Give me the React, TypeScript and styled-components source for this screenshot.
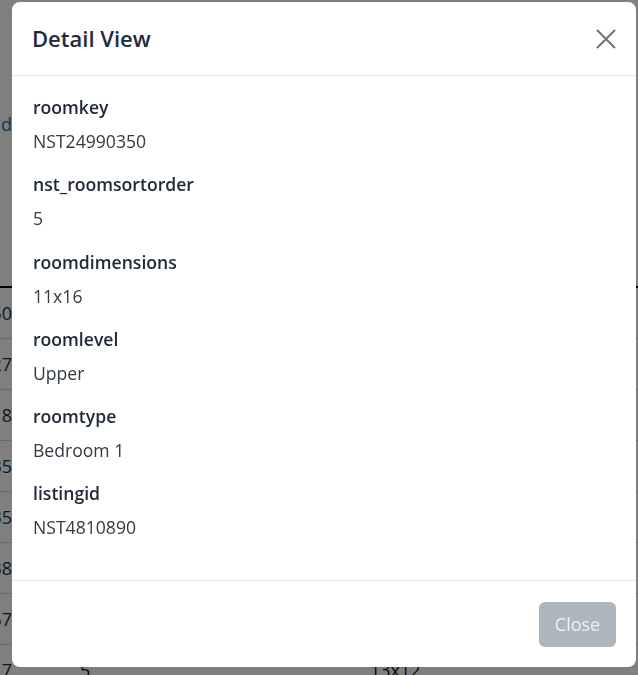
import styled, { createGlobalStyle } from "styled-components";

type Field = { label: string; value: string };

const fields: Field[] = [
  { label: "roomkey", value: "NST24990350" },
  { label: "nst_roomsortorder", value: "5" },
  { label: "roomdimensions", value: "11x16" },
  { label: "roomlevel", value: "Upper" },
  { label: "roomtype", value: "Bedroom 1" },
  { label: "listingid", value: "NST4810890" },
];

const rows = [
  ["NST24990350", "5", "11x16"],
  ["NST24990327", "3", "12x14"],
  ["NST24990318", "2", "10x11"],
  ["NST24990335", "4", "13x15"],
  ["NST24990335", "1", "14x18"],
  ["NST24990338", "6", "10x12"],
  ["NST24990357", "2", "11x13"],
  ["NST24990317", "5", "13x12"],
];

const GlobalStyle = createGlobalStyle`
  html, body {
    margin: 0;
    padding: 0;
    height: 100%;
    overflow: hidden;
    background: #ffffff;
    font-family: "Open Sans", "Noto Sans", sans-serif;
  }
`;

const Page = styled.div`
  width: 638px;
  height: 675px;
  overflow: hidden;
`;

const Table = styled.table`
  border-collapse: collapse;
  margin-left: -120px;
  width: 760px;
  table-layout: fixed;
  font-size: 18px;
  color: #111;

  col.key {
    width: 140px;
  }
  col.order {
    width: 290px;
  }
`;

const HeadCell = styled.th<{ $end?: boolean }>`
  box-sizing: border-box;
  height: 287px;
  padding: 112px 8px 0;
  vertical-align: top;
  text-align: ${(p) => (p.$end ? "right" : "left")};
  font-weight: 400;
  color: #1f6d95;
  border-bottom: 2px solid #000;
  white-space: nowrap;
`;

const Cell = styled.td<{ $end?: boolean; $indent?: number }>`
  box-sizing: border-box;
  height: 51px;
  padding: 0 8px 0 ${(p) => p.$indent ?? 8}px;
  text-align: ${(p) => (p.$end ? "right" : "left")};
  border-bottom: 1px solid #d4d4d4;
  color: ${(p) => (p.$end ? "#1a3340" : "#111")};
  white-space: nowrap;
`;

const Overlay = styled.div`
  position: fixed;
  inset: 0;
  background: rgba(0, 0, 0, 0.5);
`;

const Dialog = styled.div`
  position: fixed;
  top: 2px;
  left: 12px;
  width: 624px;
  height: 665px;
  box-sizing: border-box;
  display: flex;
  flex-direction: column;
  background: #ffffff;
  border-radius: 8px;
`;

const Header = styled.div`
  height: 74px;
  box-sizing: border-box;
  display: flex;
  align-items: center;
  justify-content: space-between;
  padding: 0 20px 0 20px;
  border-bottom: 1px solid #e6e8eb;
`;

const Title = styled.h5`
  margin: 0;
  font-size: 22px;
  font-weight: 600;
  color: #1e2b3d;
  line-height: 1.5;
`;

const CloseX = styled.button`
  width: 20px;
  height: 20px;
  padding: 0;
  border: 0;
  background: none;
  display: flex;
  cursor: pointer;
`;

const Body = styled.div`
  flex: 1;
  padding: 18px 21px 0;
  display: flex;
  flex-direction: column;
  gap: 17.3px;
`;

const Group = styled.div`
  display: flex;
  flex-direction: column;
  gap: 8px;
`;

const Label = styled.div`
  font-size: 17.6px;
  line-height: 26px;
  font-weight: 600;
  color: #212b38;
`;

const Value = styled.div`
  font-size: 17.6px;
  line-height: 26px;
  color: #333a42;
`;

const Footer = styled.div`
  height: 87px;
  box-sizing: border-box;
  display: flex;
  align-items: center;
  justify-content: flex-end;
  padding: 0 20px;
  border-top: 1px solid #e6e8eb;
`;

const CloseButton = styled.button`
  width: 77px;
  height: 45px;
  border: 0;
  border-radius: 6px;
  background: #adb5bd;
  color: #eef0f2;
  font-family: inherit;
  font-size: 18px;
`;

export default function App() {
  return (
    <Page>
      <GlobalStyle />
      <Table>
        <colgroup>
          <col className="key" />
          <col className="order" />
          <col />
        </colgroup>
        <thead>
          <tr>
            <HeadCell $end>roomkey_id</HeadCell>
            <HeadCell>nst_roomsortorder</HeadCell>
            <HeadCell>roomdimensions</HeadCell>
          </tr>
        </thead>
        <tbody>
          {rows.map((r, i) => (
            <tr key={i}>
              <Cell $end>{r[0]}</Cell>
              <Cell $indent={60}>{r[1]}</Cell>
              <Cell $indent={60}>{r[2]}</Cell>
            </tr>
          ))}
        </tbody>
      </Table>
      <Overlay />
      <Dialog>
        <Header>
          <Title>Detail View</Title>
          <CloseX aria-label="Close">
            <svg width="20" height="20" viewBox="0 0 20 20">
              <path
                d="M1 1 L19 19 M19 1 L1 19"
                stroke="#6c737a"
                strokeWidth="2"
                fill="none"
              />
            </svg>
          </CloseX>
        </Header>
        <Body>
          {fields.map((f) => (
            <Group key={f.label}>
              <Label>{f.label}</Label>
              <Value>{f.value}</Value>
            </Group>
          ))}
        </Body>
        <Footer>
          <CloseButton>Close</CloseButton>
        </Footer>
      </Dialog>
    </Page>
  );
}
